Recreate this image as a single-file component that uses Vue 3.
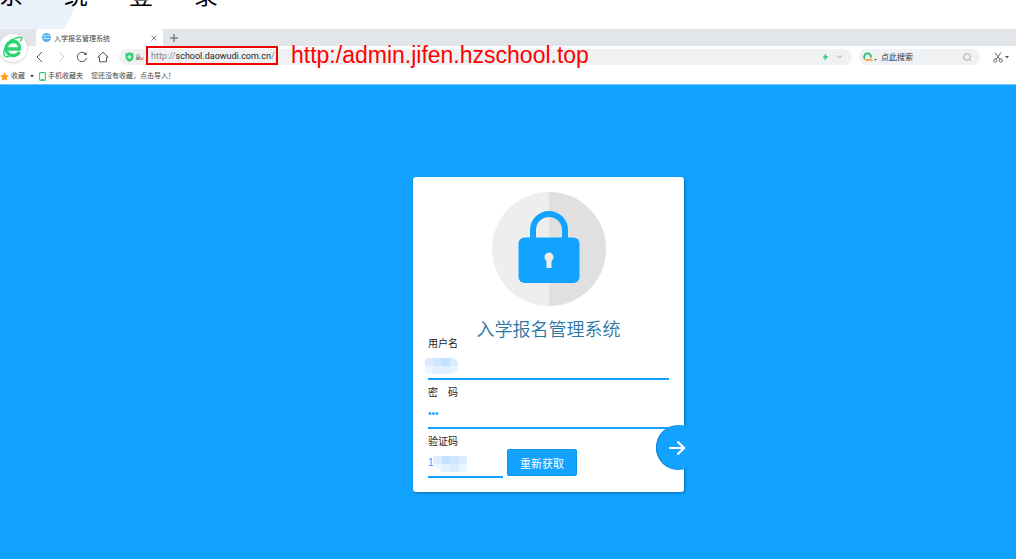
<script setup>
import { ref } from 'vue'

const heading = ['系', '统', '登', '录']
const user = ref('')
const password = ref('123')
const code = ref('1')
const userTiles = ['#dcecff', '#cfe6ff', '#c4e1ff', '#d8ebff', '#edf6ff', '#e2f0ff', '#e0efff', '#e8f4ff']
const codeTiles = ['#dcecff', '#c4e1ff', '#d0e6ff', '#dcecff', '#edf6ff', '#e2f0ff', '#d8ebff', '#e8f4ff']
</script>

<template>
  <div class="page">
    <header class="banner">
      <div class="bubble"></div>
      <h1><span v-for="c in heading" :key="c">{{ c }}</span></h1>
    </header>

    <section class="browser">
      <div class="logo">
        <svg width="24" height="24" viewBox="0 0 24 24" fill="none" stroke="#2bd673">
          <path d="M5 13H18.500C19 8 16 5.500 12.300 5.500C8 5.500 5.200 8.600 5.200 12.600C5.200 17 8.200 19.600 12.200 19.600C15 19.600 17 18.500 18.500 16" stroke-width="3.400" />
          <path d="M12 3C8 5 4.500 10 3 15.500C2 19 3.500 21.500 8 20.500" stroke-width="1.500" />
          <path d="M11 4.500C15 1.500 20 .5 20.500 2C20.800 3 20.300 4 19.500 5.500" stroke-width="1.500" />
        </svg>
      </div>

      <div class="tabs">
        <div class="tab">
          <svg width="9" height="9" viewBox="0 0 9 9"><circle cx="4.500" cy="4.500" r="4.500" fill="#5bb0ef" /><path d="M1 3H4M2 5.500H7.500M5 2L7.500 3" stroke="#d6edff" fill="none" /></svg>
          <span>入学报名管理系统</span>
          <button class="icon" aria-label="关闭标签页"><svg width="6" height="6" viewBox="0 0 6 6"><path d="M.5.5L5.500 5.500M5.500.5L.5 5.500" stroke="#777" stroke-width=".9" /></svg></button>
        </div>
        <button class="icon" aria-label="新建标签页"><svg width="8" height="8" viewBox="0 0 8 8"><path d="M4 0V8M0 4H8" stroke="#555" /></svg></button>
      </div>

      <div class="toolbar">
        <nav class="nav">
          <button class="icon" aria-label="后退"><svg width="12" height="12" viewBox="0 0 12 12" fill="none" stroke="#555"><path d="M8 1L3 6L8 11" /></svg></button>
          <button class="icon" aria-label="前进"><svg width="12" height="12" viewBox="0 0 12 12" fill="none" stroke="#ccc"><path d="M4 1L9 6L4 11" /></svg></button>
          <button class="icon" aria-label="刷新"><svg width="12" height="12" viewBox="0 0 12 12" fill="none" stroke="#555"><path d="M10.300 4A4.700 4.700 0 1 0 10.600 7" /><path d="M7.500 4H10.700V1Z" fill="#555" stroke="none" /></svg></button>
          <button class="icon" aria-label="主页"><svg width="12" height="12" viewBox="0 0 12 12" fill="none" stroke="#555"><path d="M.8 6L6 1.200L11.200 6H9.500V10.800H2.500V6Z" /></svg></button>
        </nav>

        <div class="address">
          <svg width="9" height="10" viewBox="0 0 9 10"><path d="M.5 1.200Q3 1.200 4.500.2Q6 1.200 8.500 1.200V5.500Q8 8.500 4.500 9.800Q1 8.500.5 5.500Z" fill="#35cf70" /><path d="M4.500 3V7M2.500 5H6.500" stroke="#fff" stroke-width="1.200" /></svg>
          <svg width="8" height="8" viewBox="0 0 9 8"><path d="M0 3.500H5V7.500H0Z" fill="#999" /><path d="M1 3.500V1.800Q2.500-.2 4 1.800V3.500" stroke="#999" fill="none" /><path d="M5.500 4.500L8.500 7.500M8.500 4.500L5.500 7.500" stroke="#f04848" /></svg>
          <a class="url" href="#">http://<b>school.daowudi.com.cn</b>/</a>
          <span class="note">http:/admin.jifen.hzschool.top</span>
          <div class="tools">
            <svg width="7" height="8" viewBox="0 0 7 8"><path d="M4.500 0L.5 4.500H3L2 8L6.500 3.300H3.700Z" fill="#22cf72" /></svg>
            <svg width="7" height="8" viewBox="0 0 7 8"><path d="M1 2.500L3.500 5L6 2.500" fill="none" stroke="#999" /></svg>
          </div>
        </div>

        <div class="search">
          <svg width="10" height="10" viewBox="0 0 10 10" fill="none" stroke-width="1.700"><path d="M1.800 7A3.500 3.500 0 1 1 8 5.500" stroke="#2aba72" /><path d="M1.800 7Q4.500 9.500 7 7M7 7L9.300 8.800" stroke="#ff9d35" /></svg>
          <svg width="4" height="10" viewBox="0 0 4 10"><path d="M0 7H3L1.500 8.500Z" fill="#555" /></svg>
          <input type="text" placeholder="点此搜索" aria-label="点此搜索" />
          <svg width="9" height="9" viewBox="0 0 9 9" fill="none" stroke="#aaa"><circle cx="4" cy="4" r="3.300" /><path d="M6.300 6.300L8.300 8.300" /></svg>
        </div>

        <button class="icon cut" aria-label="截图">
          <svg width="10" height="11" viewBox="0 0 10 11" fill="none" stroke="#666"><path d="M2 .5L7 7.500M8 .5L3 7.500" /><circle cx="2.200" cy="8.500" r="1.600" /><circle cx="7.800" cy="8.500" r="1.600" /></svg>
          <svg width="4" height="3" viewBox="0 0 4 3"><path d="M0 0H4L2 2.500Z" fill="#555" /></svg>
        </button>
      </div>

      <div class="bookmarks">
        <svg width="9" height="9" viewBox="0 0 10 10"><path d="M5 0L6.500 3.400L10 3.800L7.400 6.200L8.100 9.800L5 8L1.900 9.800L2.600 6.200L0 3.800L3.500 3.400Z" fill="#ff9c1a" /></svg>
        <span class="fav">收藏</span>
        <svg class="caret" width="4" height="3" viewBox="0 0 4 3"><path d="M0 0H4L2 2.500Z" fill="#444" /></svg>
        <svg width="7" height="9" viewBox="0 0 7 9"><rect x=".6" y=".6" width="5.800" height="7.800" rx=".8" fill="none" stroke="#37cd74" stroke-width="1.100" /><path d="M2 7.500H5" stroke="#37cd74" /></svg>
        <span class="phone">手机收藏夹</span>
        <span>您还没有收藏，点击导入！</span>
      </div>
    </section>

    <main>
      <form class="card" @submit.prevent>
        <svg class="lock" width="114" height="114" viewBox="0 0 114 114">
          <circle cx="57" cy="57" r="57" fill="#eee" />
          <path d="M57 0A57 57 0 0 1 57 114Z" fill="#e0e0e0" />
          <path d="M41 48V38A16 16 0 0 1 73 38V48" fill="none" stroke="#12a2ff" stroke-width="6" />
          <rect x="26.500" y="45.500" width="61" height="45.500" rx="6" fill="#12a2ff" />
          <path d="M57 60.500A4.700 4.700 0 0 1 59.500 69V76H54.500V69A4.700 4.700 0 0 1 57 60.500Z" fill="#eee" />
        </svg>
        <h2>入学报名管理系统</h2>

        <div class="field">
          <label for="user">用户名</label>
          <input id="user" v-model="user" type="text" />
          <div class="mosaic"><i v-for="(c, i) in userTiles" :key="i" :style="{ background: c }"></i></div>
        </div>
        <div class="field">
          <label for="password">密　码</label>
          <input id="password" v-model="password" type="password" />
        </div>
        <div class="field">
          <label for="code">验证码</label>
          <div class="row">
            <input id="code" v-model="code" type="text" />
            <button class="refresh" type="button">重新获取</button>
          </div>
          <div class="mosaic code"><i v-for="(c, i) in codeTiles" :key="i" :style="{ background: c }"></i></div>
        </div>

        <button class="go" type="submit" aria-label="登录">
          <svg width="18" height="16" viewBox="0 0 18 16" fill="none" stroke="#fff" stroke-width="2.200"><path d="M1 8H16M9.500 1.500L16 8L9.500 14.500" /></svg>
        </button>
      </form>
    </main>
  </div>
</template>

<style>
body { margin: 0; }
</style>

<style scoped>
* { box-sizing: border-box; }
.page {
  min-height: 100vh;
  display: flex;
  flex-direction: column;
  background: #fff;
  font-family: "Liberation Sans", "Noto Sans CJK SC", sans-serif;
}
button { font-family: inherit; cursor: pointer; }
input { font-family: inherit; outline: none; }
.banner { position: relative; height: 29px; overflow: hidden; }
.bubble {
  position: absolute;
  left: -77px;
  top: -91px;
  width: 154px;
  height: 154px;
  border-radius: 50%;
  background: #e9f1fa;
}
h1 {
  position: absolute;
  left: -1px;
  top: -16px;
  margin: 0;
  display: flex;
  gap: 41px;
  font-size: 24px;
  line-height: 24px;
  font-weight: 400;
  color: #000;
}
.browser { position: relative; }
.logo {
  position: absolute;
  left: -1px;
  top: 5px;
  width: 28px;
  height: 28px;
  display: flex;
  align-items: center;
  justify-content: center;
  border-radius: 50%;
  background: #fff;
  box-shadow: 0 1px 3px #0003;
}
.icon {
  display: flex;
  align-items: center;
  padding: 0;
  border: 0;
  background: none;
}
.tabs {
  display: flex;
  align-items: center;
  gap: 7px;
  height: 17px;
  padding-left: 36px;
  background: #e2e5ea;
}
.tab {
  display: flex;
  align-items: center;
  gap: 3px;
  width: 127px;
  height: 17px;
  padding: 0 6px;
  border-radius: 3px 3px 0 0;
  background: #fff;
  font-size: 7px;
  color: #444;
}
.tab .icon { margin-left: auto; }
.toolbar {
  display: flex;
  align-items: center;
  height: 22px;
  padding: 0 7px 0 34px;
}
.nav { display: flex; gap: 9px; }
.address {
  position: relative;
  flex: 1;
  display: flex;
  align-items: center;
  gap: 2px;
  height: 16px;
  margin-left: 10px;
  padding: 0 9px 0 6px;
  border-radius: 8px;
  background: #eff1f3;
}
.url {
  align-self: flex-end;
  height: 19px;
  padding: 0 1px 0 3px;
  border: 2px solid #f00000;
  font-family: Roboto, sans-serif;
  font-size: 9px;
  line-height: 17px;
  color: #888;
  text-decoration: none;
  white-space: nowrap;
}
.url b { font-weight: 400; color: #222; }
.note {
  position: absolute;
  left: 172px;
  top: -7px;
  font-size: 23px;
  line-height: 26px;
  color: #f00;
  white-space: nowrap;
}
.tools { display: flex; gap: 7px; margin-left: auto; }
.search {
  display: flex;
  align-items: center;
  gap: 1px;
  width: 121px;
  height: 16px;
  margin: 0 13px 0 7px;
  padding: 0 8px 0 4px;
  border-radius: 8px;
  background: #eff1f3;
}
.search input {
  flex: 1;
  min-width: 0;
  padding: 0 2px;
  border: 0;
  background: none;
  font-size: 8px;
}
.search input::placeholder { color: #333; }
.cut { gap: 2px; }
.bookmarks {
  display: flex;
  align-items: center;
  height: 16px;
  font-size: 7px;
  line-height: 14px;
  color: #444;
}
.fav { margin-left: 2px; }
.caret { margin: 0 5px 0 5px; }
.phone { margin: 0 8px 0 2px; }
main {
  flex: 1;
  display: flex;
  align-items: flex-start;
  justify-content: center;
  padding: 92px 0 67px 81px;
  border-top: 1px solid #6fc3f8;
  background: #12a2ff;
}
.card {
  position: relative;
  width: 271px;
  padding: 15px 15px 8px;
  border-radius: 3px;
  background: #fff;
  box-shadow: 1px 1px 3px #0005;
}
.lock { display: block; margin: 0 auto; }
h2 {
  margin: 12px 0 0;
  font-size: 18px;
  line-height: 24px;
  font-weight: 350;
  text-align: center;
  color: #2b76a3;
}
.field { position: relative; height: 49px; }
.field:first-of-type { margin-top: -5px; }
.field label {
  display: block;
  font-size: 10px;
  line-height: 14px;
  color: #222;
}
.field input {
  display: block;
  width: 100%;
  height: 29px;
  padding: 0;
  border: 0;
  border-bottom: 2px solid #12a2ff;
  background: transparent;
  font-size: 10px;
  color: #12a2ff;
}
.row { display: flex; gap: 4px; }
.field .row input { width: 75px; }
.refresh {
  width: 70px;
  height: 27px;
  padding: 0;
  border: 1px solid #0c93ec;
  border-radius: 2px;
  background: #12a2ff;
  font-size: 11px;
  color: #fff;
}
.mosaic {
  position: absolute;
  left: -3px;
  top: 21px;
  display: grid;
  grid-template-columns: repeat(4, 1fr);
  width: 33px;
  height: 16px;
  overflow: hidden;
  border-radius: 3px 7px 7px 3px;
}
.mosaic.code { left: 5px; width: 34px; border-radius: 2px 2px 2px 12px; }
.go {
  position: absolute;
  right: -17px;
  bottom: 22px;
  width: 45px;
  height: 45px;
  display: flex;
  align-items: center;
  justify-content: center;
  padding: 0 3px 0 0;
  border: 0;
  border-radius: 50%;
  background: #12a2ff;
  box-shadow: inset 1px 0 1px #0b7fd0;
}
</style>
